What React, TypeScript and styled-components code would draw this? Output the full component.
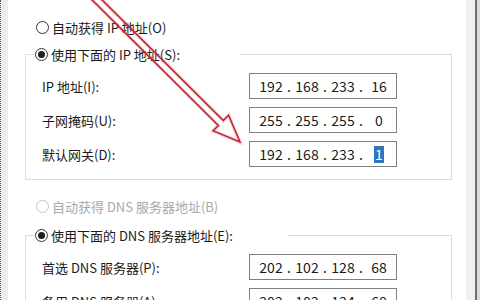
import React from "react";
import styled, { createGlobalStyle } from "styled-components";

const Global = createGlobalStyle`
  html, body { margin: 0; padding: 0; background: #fff; }
  body { font-family: "Noto Sans CJK SC", "Noto Sans", sans-serif; }
  * { box-sizing: border-box; }
`;

const Page = styled.div`
  position: relative;
  display: flex;
  width: 480px;
  height: 300px;
  overflow: hidden;
  background: #fff;
  font-size: 13px;
  color: #1a1a1a;
`;

const LeftEdge = styled.div`
  flex: 0 0 8px;
  background: #ececec;
  border-left: 1px dotted #555;
`;

const RightEdge = styled.div`
  flex: 0 0 14px;
  background: linear-gradient(to right, #f0f0f0 0 9px, #6e6e6e 9px 11px, #dadada 11px);
`;

const Content = styled.div`
  flex: 1;
  display: flex;
  flex-direction: column;
  padding: 19px 14px 0 17px;
`;

const RadioRow = styled.div<{ $disabled?: boolean; $mt?: number }>`
  display: flex;
  align-items: center;
  gap: 3px;
  height: 16px;
  margin-left: 11px;
  margin-top: ${(p) => p.$mt ?? 0}px;
  color: ${(p) => (p.$disabled ? "#a9a9a9" : "#1a1a1a")};
  white-space: nowrap;
`;

const RadioDot = styled.span<{ $checked?: boolean; $disabled?: boolean }>`
  position: relative;
  flex: 0 0 13px;
  width: 13px;
  height: 13px;
  border-radius: 50%;
  border: 1px solid ${(p) => (p.$disabled ? "#c4c4c4" : "#333")};
  background: #fff;
  &::after {
    content: "";
    display: ${(p) => (p.$checked ? "block" : "none")};
    position: absolute;
    left: 2px;
    top: 2px;
    width: 7px;
    height: 7px;
    border-radius: 50%;
    background: #1e1e1e;
  }
`;

const Group = styled.fieldset<{ $mt: number }>`
  margin: ${(p) => p.$mt}px 0 0 0;
  padding: 0;
  min-width: 0;
  border: 1px solid #dcdcdc;
`;

const Legend = styled.legend<{ $w: number }>`
  display: flex;
  align-items: center;
  gap: 3px;
  width: ${(p) => p.$w}px;
  height: 18px;
  margin-left: 8px;
  padding: 0 0 0 1px;
  white-space: nowrap;
`;

const GroupBody = styled.div`
  display: flex;
  flex-direction: column;
  gap: 8px;
  padding: 10px 0 12px 16px;
`;

const Row = styled.div`
  display: flex;
  align-items: center;
  height: 26px;
`;

const Label = styled.span`
  flex: 0 0 207px;
  white-space: nowrap;
`;

const IpBox = styled.div`
  display: flex;
  align-items: center;
  width: 148px;
  height: 26px;
  padding-left: 7px;
  border: 1px solid #808080;
  background: #fff;
  font-size: 14px;
  color: #1a1a1a;
`;

const Segment = styled.span`
  flex: 0 0 28px;
  text-align: center;
`;

const Dot = styled.span`
  flex: 0 0 8px;
  text-align: center;
`;

const Selected = styled.span`
  display: inline-block;
  background: #2f76bd;
  color: #fff;
  padding: 0 1px;
  line-height: 17px;
`;

const Overlay = styled.svg`
  position: absolute;
  left: 0;
  top: 0;
  pointer-events: none;
`;

function IpField({ parts, selectLast }: { parts: string[]; selectLast?: boolean }) {
  return (
    <IpBox>
      {parts.map((p, i) => (
        <React.Fragment key={i}>
          <Segment>{selectLast && i === parts.length - 1 ? <Selected>{p}</Selected> : p}</Segment>
          {i < parts.length - 1 && <Dot>.</Dot>}
        </React.Fragment>
      ))}
    </IpBox>
  );
}

// arrow geometry
const T = [240, 142];
const S = [77, -20];
const dx = T[0] - S[0];
const dy = T[1] - S[1];
const len = Math.hypot(dx, dy);
const d = [dx / len, dy / len];
const n = [d[1], -d[0]];
const headLen = 27;
const headHalf = 11;
const shaftHalf = 3.5;
const B = [T[0] - d[0] * headLen, T[1] - d[1] * headLen];
const pt = (p: number[], k: number) => `${(p[0] + n[0] * k).toFixed(1)},${(p[1] + n[1] * k).toFixed(1)}`;
const arrowPoints = [
  pt(S, shaftHalf),
  pt(B, shaftHalf),
  pt(B, headHalf),
  `${T[0]},${T[1]}`,
  pt(B, -headHalf),
  pt(B, -shaftHalf),
  pt(S, -shaftHalf),
].join(" ");

export default function App() {
  return (
    <>
      <Global />
      <Page>
        <LeftEdge />
        <Content>
          <RadioRow>
            <RadioDot />
            <span>自动获得 IP 地址(O)</span>
          </RadioRow>
          <Group $mt={10}>
            <Legend $w={206}>
              <RadioDot $checked />
              <span>使用下面的 IP 地址(S):</span>
            </Legend>
            <GroupBody>
              <Row>
                <Label>IP 地址(I):</Label>
                <IpField parts={["192", "168", "233", "16"]} />
              </Row>
              <Row>
                <Label>子网掩码(U):</Label>
                <IpField parts={["255", "255", "255", "0"]} />
              </Row>
              <Row>
                <Label>默认网关(D):</Label>
                <IpField parts={["192", "168", "233", "1"]} selectLast />
              </Row>
            </GroupBody>
          </Group>
          <RadioRow $disabled $mt={18}>
            <RadioDot $disabled />
            <span>自动获得 DNS 服务器地址(B)</span>
          </RadioRow>
          <Group $mt={12}>
            <Legend $w={254}>
              <RadioDot $checked />
              <span>使用下面的 DNS 服务器地址(E):</span>
            </Legend>
            <GroupBody>
              <Row>
                <Label>首选 DNS 服务器(P):</Label>
                <IpField parts={["202", "102", "128", "68"]} />
              </Row>
              <Row>
                <Label>备用 DNS 服务器(A):</Label>
                <IpField parts={["202", "102", "134", "68"]} />
              </Row>
            </GroupBody>
          </Group>
        </Content>
        <RightEdge />
        <Overlay width="480" height="300" viewBox="0 0 480 300">
          <polygon points={arrowPoints} fill="none" stroke="rgba(235,90,100,0.35)" strokeWidth="3.4" strokeLinejoin="miter" />
          <polygon points={arrowPoints} fill="none" stroke="#b5222b" strokeWidth="1.4" strokeLinejoin="miter" />
        </Overlay>
      </Page>
    </>
  );
}
